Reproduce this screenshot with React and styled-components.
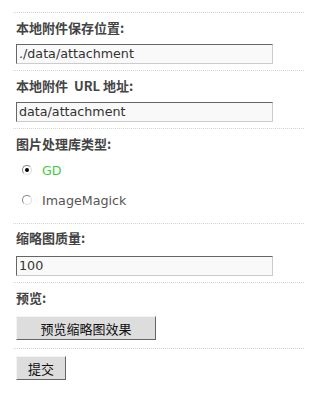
import React from "react";
import styled, { createGlobalStyle } from "styled-components";

const GlobalStyle = createGlobalStyle`
    body {
        margin: 0;
        background: #ffffff;
        font-family: "DejaVu Sans", "Noto Sans CJK SC", sans-serif;
        color: #333;
    }
`;

const Form = styled.div`
    padding: 12px 0 0 13px;
    width: 291px;
`;

const Row = styled.div`
    border-top: 1px dotted #cfd6d6;
    padding: ${(p) => p.pad || "5px 0 6px 3px"};
`;

const Label = styled.div`
    font-family: "Noto Sans CJK SC", sans-serif;
    font-size: 13px;
    font-weight: 700;
    line-height: 20px;
    color: #444;
    margin-bottom: ${(p) => (p.gap ? `${p.gap}px` : "6px")};
`;

const TextInput = styled.div`
    box-sizing: border-box;
    width: 257px;
    height: 20px;
    background: #f9f9f9;
    border: 1px solid;
    border-color: #666 #ccc #ccc #666;
    font-size: 12.7px;
    line-height: 18px;
    padding-left: 2px;
    color: #333;
    white-space: nowrap;
`;

const RadioRow = styled.label`
    display: flex;
    align-items: center;
    height: 30px;
    padding-left: 6px;
    font-size: 12.7px;
    color: ${(p) => (p.checked ? "#3fcc3f" : "#555")};
`;

const RadioDot = styled.span`
    position: relative;
    box-sizing: border-box;
    width: 10px;
    height: 10px;
    border-radius: 50%;
    border: 1px solid;
    border-color: #888 #ddd #ddd #888;
    background: #fff;
    margin-right: 10px;

    &::after {
        content: "";
        display: ${(p) => (p.checked ? "block" : "none")};
        position: absolute;
        left: 2px;
        top: 2px;
        width: 4px;
        height: 4px;
        border-radius: 50%;
        background: #000;
    }
`;

const Button = styled.button`
    box-sizing: border-box;
    width: ${(p) => p.width}px;
    height: 24px;
    margin: 0;
    padding: 0;
    background: #dddddd;
    border: 1px solid;
    border-color: #f4f4f4 #666 #666 #f4f4f4;
    font-family: "Noto Sans CJK SC", sans-serif;
    font-size: 13px;
    color: #111;
    display: block;
`;

const App = () => {
    return (
        <>
            <GlobalStyle />
            <Form>
                <Row>
                    <Label>本地附件保存位置:</Label>
                    <TextInput>./data/attachment</TextInput>
                </Row>
                <Row>
                    <Label>本地附件&nbsp; URL 地址:</Label>
                    <TextInput>data/attachment</TextInput>
                </Row>
                <Row pad="5px 0 8px 3px">
                    <Label gap={1}>图片处理库类型:</Label>
                    <RadioRow checked>
                        <RadioDot checked />
                        GD
                    </RadioRow>
                    <RadioRow>
                        <RadioDot />
                        ImageMagick
                    </RadioRow>
                </Row>
                <Row pad="4px 0 6px 3px">
                    <Label gap={8}>缩略图质量:</Label>
                    <TextInput>100</TextInput>
                </Row>
                <Row pad="5px 0 8px 3px">
                    <Label gap={8}>预览:</Label>
                    <Button width={140}>预览缩略图效果</Button>
                </Row>
                <Row pad="7px 0 0 3px">
                    <Button width={50}>提交</Button>
                </Row>
            </Form>
        </>
    );
};

export default App;
